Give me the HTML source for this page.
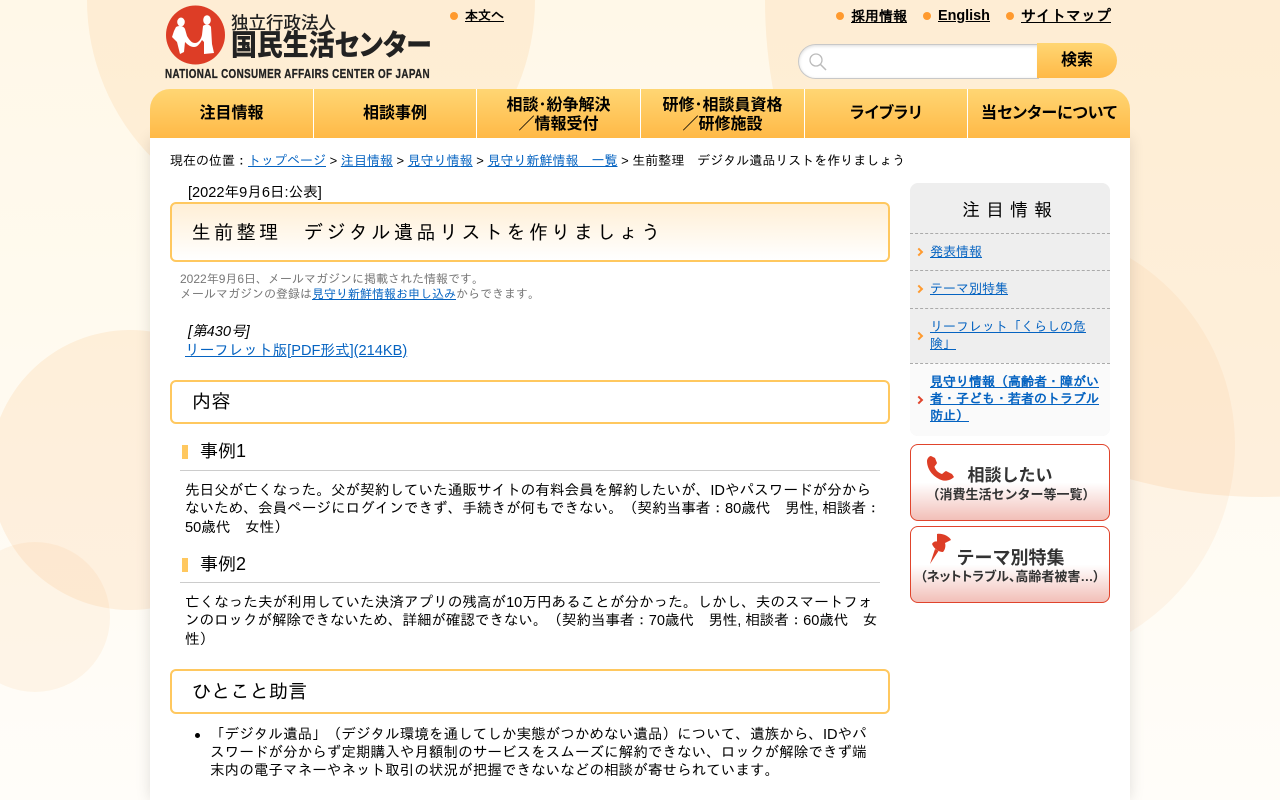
<!DOCTYPE html>
<html lang="ja"><head><meta charset="utf-8"><title>生前整理 デジタル遺品リストを作りましょう</title>
<style>
*{box-sizing:border-box}
html,body{margin:0;padding:0}
body{width:1280px;height:800px;overflow:hidden;position:relative;font-family:"Liberation Sans","IPAGothic",sans-serif;color:#000;background:linear-gradient(#fff8e8,#fffdf9)}
.a{position:absolute;white-space:nowrap}
a{color:#0563c1}
.img{font-family:"Liberation Sans","Noto Sans CJK JP",sans-serif;font-feature-settings:"palt"}
.top a{color:#000;font-weight:bold}
.dot{position:absolute;width:8px;height:8px;border-radius:50%;background:#ff9a2e}
#nav{position:absolute;left:150px;top:89px;width:980px;height:49px;border-radius:20px 20px 0 0;background:linear-gradient(#ffd673,#ffb947);overflow:hidden;font-family:"Liberation Sans","Noto Sans CJK JP",sans-serif}
#nav div{position:absolute;top:1px;height:49px;display:flex;align-items:center;justify-content:center;text-align:center;font-weight:bold;font-size:16px;line-height:19px}
#nav div.p{font-feature-settings:"palt"}
#nav i{position:absolute;top:0;width:1px;height:49px;background:#fff}
#main{position:absolute;left:150px;top:138px;width:980px;height:662px;background:#fff;box-shadow:0 0 14px rgba(0,0,0,.12)}
.h{position:absolute;left:170px;width:720px;border:2px solid #ffc85f;border-radius:6px;background:#fff;font-size:19.2px;padding-left:20px}
.m{position:absolute;left:180px;width:700px;height:33px;border-bottom:1px solid #ccc;font-size:18px;padding-left:20px;line-height:26px}
.m:before{content:"";position:absolute;left:2px;top:7px;width:6px;height:14px;background:#ffc85f}
.t{position:absolute;left:185px;font-size:14.6px;line-height:18.4px;white-space:nowrap}
#side{position:absolute;left:910px;top:183px;width:200px;height:253px;background:#eee;border-radius:8px;overflow:hidden}
.si{position:absolute;left:0;width:200px;border-top:1px dashed #aaa;font-size:13px;line-height:17px}
.si a{position:absolute;left:20px;white-space:nowrap}
.si i{position:absolute;left:6px;width:6px;height:6px;border-top:2px solid #ff9a2e;border-right:2px solid #ff9a2e;transform:rotate(45deg)}
.btn{position:absolute;left:910px;width:200px;height:77px;border:1px solid #e0442c;border-radius:8px;background:linear-gradient(#fff 0,#fff 50%,#f2bfb8 100%);text-align:center;font-weight:bold;color:#333}
</style></head><body>
<svg class="a" style="left:0;top:0" width="1280" height="800">
<g fill="#f9b56e" fill-opacity=".17">
<circle cx="311" cy="0" r="224"/>
<circle cx="1262" cy="0" r="497"/>
<circle cx="130" cy="470" r="140"/>
<circle cx="1016" cy="445" r="219" fill-opacity=".1"/>
<circle cx="35" cy="617" r="75" fill-opacity=".11"/>
</g></svg>

<svg class="a" style="left:160px;top:0" width="70" height="70" viewBox="160 0 70 70">
<circle cx="195.5" cy="35" r="29.5" fill="#dd3d26"/>
<g fill="#fff">
<ellipse cx="181" cy="22" rx="3.800" ry="4.500"/>
<ellipse cx="207" cy="20" rx="3.800" ry="4.800"/>
<path d="M176 27C179 25 184 26 185 29L187 36C190 41 192 43 195 43C198 43 201 40 202 35L203 26C205 24 210 24 211 27L212 44L214 53L204 54L204 42L202 40C199 45 197 47 194 47C190 47 187 44 185 42L184 52L180 54L177 42L172 37L174 31Z"/>
</g></svg>
<div class="a img" style="left:231px;top:12px;font-size:17.500px;line-height:22px;font-weight:500;color:#222;font-feature-settings:normal">独立行政法人</div>
<div class="a img" style="left:231px;top:29px;font-size:29px;line-height:34px;font-weight:900;color:#222;letter-spacing:-.1px;transform-origin:0 50%;transform:scaleX(.895)">国民生活センター</div>
<div class="a" style="left:165px;top:66px;font-size:13px;line-height:15px;font-weight:bold;color:#222;letter-spacing:.5px;transform-origin:0 0;transform:scaleX(.757);-webkit-text-stroke:.3px #222">NATIONAL CONSUMER AFFAIRS CENTER OF JAPAN</div>

<div class="top">
<span class="dot" style="left:450px;top:12px"></span><a class="a" href="#" style="left:465px;top:8px;font-size:13px">本文へ</a>
<span class="dot" style="left:836px;top:12px"></span><a class="a" href="#" style="left:851px;top:8px;font-size:14px">採用情報</a>
<span class="dot" style="left:923px;top:12px"></span><a class="a" href="#" style="left:938px;top:8px;font-size:14.400px;line-height:17px">English</a>
<span class="dot" style="left:1006px;top:12px"></span><a class="a" href="#" style="left:1021px;top:8px;font-size:15px">サイトマップ</a>
</div>

<div class="a" style="left:798px;top:44px;width:241px;height:35px;background:#fff;border:1px solid #c8c8c8;border-right:0;border-radius:18px 0 0 18px;box-shadow:inset 0 1px 3px rgba(0,0,0,.15)"></div>
<svg class="a" style="left:808px;top:52px" width="20" height="20"><circle cx="8" cy="8" r="6" fill="none" stroke="#bbb" stroke-width="1.300"/><path d="M12.500 12.500L18 18" stroke="#bbb" stroke-width="1.500"/></svg>
<div class="a img" style="left:1037px;top:43px;width:80px;height:35px;border-radius:0 18px 18px 0;background:linear-gradient(#ffd673,#ffb947);text-align:center;font-weight:bold;font-size:16px;line-height:35px">検索</div>

<div id="main"></div>
<div id="nav">
<i style="left:163px"></i><i style="left:326px"></i><i style="left:490px"></i><i style="left:654px"></i><i style="left:817px"></i>
<div style="left:0;width:163px;top:0">注目情報</div>
<div style="left:164px;width:162px;top:0">相談事例</div>
<div style="left:327px;width:163px">相談･紛争解決<br>／情報受付</div>
<div style="left:491px;width:163px">研修･相談員資格<br>／研修施設</div>
<div class="p" style="left:655px;width:162px;top:0">ライブラリ</div>
<div class="p" style="left:818px;width:162px;top:0">当センターについて</div>
</div>

<div class="a" style="left:170px;top:152px;font-size:13px;line-height:18px">現在の位置：<a href="#">トップページ</a> &gt; <a href="#">注目情報</a> &gt; <a href="#">見守り情報</a> &gt; <a href="#">見守り新鮮情報　一覧</a> &gt; 生前整理　デジタル遺品リストを作りましょう</div>

<div class="a" style="left:188px;top:184px;font-size:14.6px;line-height:18px">[2022年9月6日:公表]</div>
<div class="h a" style="top:202px;height:60px;line-height:59px;letter-spacing:3.300px;padding-left:19.500px;background:linear-gradient(#ffefd6,#fff)">生前整理　デジタル遺品リストを作りましょう</div>
<div class="a" style="left:180px;top:272px;font-size:12px;line-height:15px;color:#777">2022年9月6日、メールマガジンに掲載された情報です。<br>メールマガジンの登録は<a href="#">見守り新鮮情報お申し込み</a>からできます。</div>
<div class="a" style="left:188px;top:323px;font-size:14.6px;line-height:18px;font-style:italic">[第430号]</div>
<a class="a" href="#" style="left:185px;top:342px;font-size:14.6px;line-height:18px">リーフレット版[PDF形式](214KB)</a>

<div class="h" style="top:380px;height:44px;line-height:42px">内容</div>
<div class="m" style="top:438px">事例1</div>
<div class="t" style="top:482px">先日父が亡くなった。父が契約していた通販サイトの有料会員を解約したいが、IDやパスワードが分から<br>ないため、会員ページにログインできず、手続きが何もできない。（契約当事者：80歳代　男性, 相談者：<br>50歳代　女性）</div>
<div class="m" style="top:551px;height:32px">事例2</div>
<div class="t" style="top:594px">亡くなった夫が利用していた決済アプリの残高が10万円あることが分かった。しかし、夫のスマートフォ<br><span style="letter-spacing:-.1px">ンのロックが解除できないため、詳細が確認できない。（契約当事者：70歳代　男性, 相談者：60歳代　女</span><br>性）</div>
<div class="h" style="top:669px;height:45px;line-height:43px">ひとこと助言</div>
<div class="a" style="left:195px;top:733px;width:5px;height:5px;border-radius:50%;background:#000"></div>
<div class="t" style="left:210px;top:725.500px">「デジタル遺品」（デジタル環境を通してしか実態がつかめない遺品）について、遺族から、IDやパ<br>スワードが分からず定期購入や月額制のサービスをスムーズに解約できない、ロックが解除できず端<br>末内の電子マネーやネット取引の状況が把握できないなどの相談が寄せられています。</div>

<div id="side">
<div class="a" style="left:0;top:15px;width:200px;text-align:center;font-size:18px;line-height:24px;letter-spacing:6px">注目情報</div>
<div class="si" style="top:50px;height:37px"><i style="top:15px"></i><a href="#" style="top:9px">発表情報</a></div>
<div class="si" style="top:87px;height:38px"><i style="top:15px"></i><a href="#" style="top:9px">テーマ別特集</a></div>
<div class="si" style="top:125px;height:55px"><i style="top:24px"></i><a href="#" style="top:9px">リーフレット「くらしの危<br>険」</a></div>
<div class="si" style="top:180px;height:73px;background:#fafafa"><i style="top:33px;border-color:#e0442c"></i><a href="#" style="top:9px;font-weight:bold">見守り情報（高齢者・障がい<br>者・子ども・若者のトラブル<br>防止）</a></div>
</div>

<div class="btn" style="top:444px"></div>
<svg class="a" style="left:925px;top:453px" width="32" height="32" viewBox="925 453 32 32"><path d="M931 456L935 458L937 463C936 465 934.500 466 934.500 467C936 471 939 473 942 474C943 473.500 944.500 471.500 946 471L952 474L954 477C951 480 947 481 943 480.500C934 478 927 470 927 461C927 459 929 456 931 456Z" fill="#dd3d26"/></svg>
<div class="a img" style="left:910px;top:465px;width:200px;text-align:center;font-size:17px;line-height:22px;font-weight:bold;color:#333;font-feature-settings:normal">相談したい</div>
<div class="a img" style="left:910px;top:486px;width:200px;padding-left:2px;text-align:center;font-size:13px;line-height:17px;font-weight:bold;color:#333;font-feature-settings:normal">（消費生活センター等一覧）</div>

<div class="btn" style="top:526px"></div>
<svg class="a" style="left:925px;top:530px" width="30" height="36" viewBox="925 530 30 36"><path d="M937 534C942 533 949 536 951 540L945 543C946 546 945 550 943 552C939 552 934 549 932 544C933 542 935 541 937 541.500ZM935 549L938.500 551L930 564Z" fill="#dd3d26"/></svg>
<div class="a img" style="left:910px;top:547px;width:200px;padding-left:1px;text-align:center;font-size:18px;line-height:22px;font-weight:bold;color:#333;font-feature-settings:normal">テーマ別特集</div>
<div class="a img" style="left:910px;top:568px;width:200px;text-align:center;font-size:13px;line-height:17px;font-weight:bold;color:#333">（ネットトラブル、高齢者被害…）</div>
</body></html>
